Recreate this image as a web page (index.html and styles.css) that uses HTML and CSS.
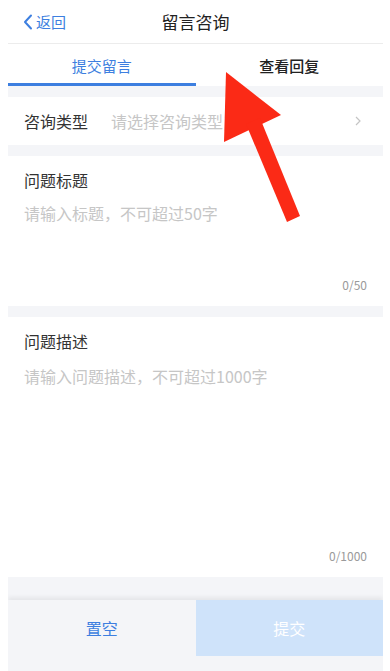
FILE: index.html
```html
<!DOCTYPE html>
<html lang="zh-CN">
<head>
<meta charset="utf-8">
<title>留言咨询</title>
<link rel="stylesheet" href="styles.css">
</head>
<body>
<div class="app">
  <header class="nav">
    <div class="back">
      <svg class="back-icon" width="10" height="16" viewBox="0 0 10 16"><path d="M8 1.5 L2 8 L8 14.5" fill="none" stroke="#3d7fe0" stroke-width="2" stroke-linecap="round" stroke-linejoin="round"/></svg>
      <span>返回</span>
    </div>
    <div class="title">留言咨询</div>
  </header>
  <nav class="tabs">
    <div class="tab active">提交留言</div>
    <div class="tab">查看回复</div>
  </nav>
  <main class="content">
    <div class="row">
      <span class="label">咨询类型</span>
      <span class="ph select-ph">请选择咨询类型</span>
      <svg class="chev" width="6" height="10" viewBox="0 0 6 10"><path d="M1 1 L5 5 L1 9" fill="none" stroke="#c4c4c4" stroke-width="1.2"/></svg>
    </div>
    <section class="field field-title">
      <div class="label">问题标题</div>
      <div class="ph">请输入标题，不可超过50字</div>
      <div class="count">0/50</div>
    </section>
    <section class="field field-desc">
      <div class="label">问题描述</div>
      <div class="ph">请输入问题描述，不可超过1000字</div>
      <div class="count">0/1000</div>
    </section>
  </main>
  <footer class="actions">
    <button class="btn btn-reset">置空</button>
    <button class="btn btn-submit">提交</button>
  </footer>
  <svg class="arrow" width="120" height="170" viewBox="0 0 120 170">
    <polygon points="38,12 36,82 93,55" fill="#fb2a16"/>
    <polygon points="58,64 72,58 112,156 99,162" fill="#fb2a16"/>
  </svg>
</div>
</body>
</html>
```
FILE: styles.css
```css
* { box-sizing: border-box; }
html, body { margin: 0; padding: 0; background: #fff; }
body { padding-left: 8px; font-family: "Noto Sans CJK SC", "Noto Sans", sans-serif; }
.app { position: relative; width: 375px; height: 671px; background: #f4f5f8; display: flex; flex-direction: column; overflow: hidden; }
.nav { height: 44px; background: #fff; border-bottom: 1px solid #ececec; display: flex; align-items: center; justify-content: center; position: relative; flex-shrink: 0; }
.back { position: absolute; left: 15px; top: 0; height: 43px; display: flex; align-items: center; gap: 3px; color: #3d7fe0; font-size: 15px; }
.title { font-size: 17px; color: #222; }
.tabs { height: 42px; background: #fff; display: flex; flex-shrink: 0; }
.tab { flex: 1; display: flex; align-items: center; justify-content: center; font-size: 15px; color: #222; font-weight: 500; border-bottom: 3px solid transparent; padding-top: 3px; }
.tab.active { color: #3d7fe0; border-bottom-color: #3d7fe0; font-weight: 400; }
.content { flex: 1; display: flex; flex-direction: column; gap: 11px; padding-top: 11px; }
.row { height: 48px; background: #fff; display: flex; align-items: center; padding: 0 22px 0 16px; }
.label { font-size: 16px; color: #333; }
.ph { font-size: 16px; color: #c6c6c6; }
.select-ph { margin-left: 23px; flex: 1; }
.chev { flex-shrink: 0; }
.field { background: #fff; display: flex; flex-direction: column; padding: 12px 16px 0 16px; }
.field .ph { margin-top: 9px; flex: 1; }
.count { align-self: flex-end; font-size: 12px; color: #9a9a9a; }
.field-title { height: 150px; padding-bottom: 13px; }
.field-desc { height: 260px; padding-top: 12px; padding-bottom: 13px; }
.field-desc .ph { margin-top: 11px; }
.actions { height: 71px; margin-top: 22px; display: flex; align-items: flex-start; box-shadow: 0 -3px 4px rgba(0,0,0,0.06); background: #f4f5f8; }
.btn { flex: 1; height: 56px; border: 0; font-family: inherit; font-size: 16px; padding: 0; }
.btn-reset { background: #f4f5f8; color: #3d7fe0; }
.btn-submit { background: #cfe3fa; color: #fff; }
.arrow { position: absolute; left: 180px; top: 60px; }
```
